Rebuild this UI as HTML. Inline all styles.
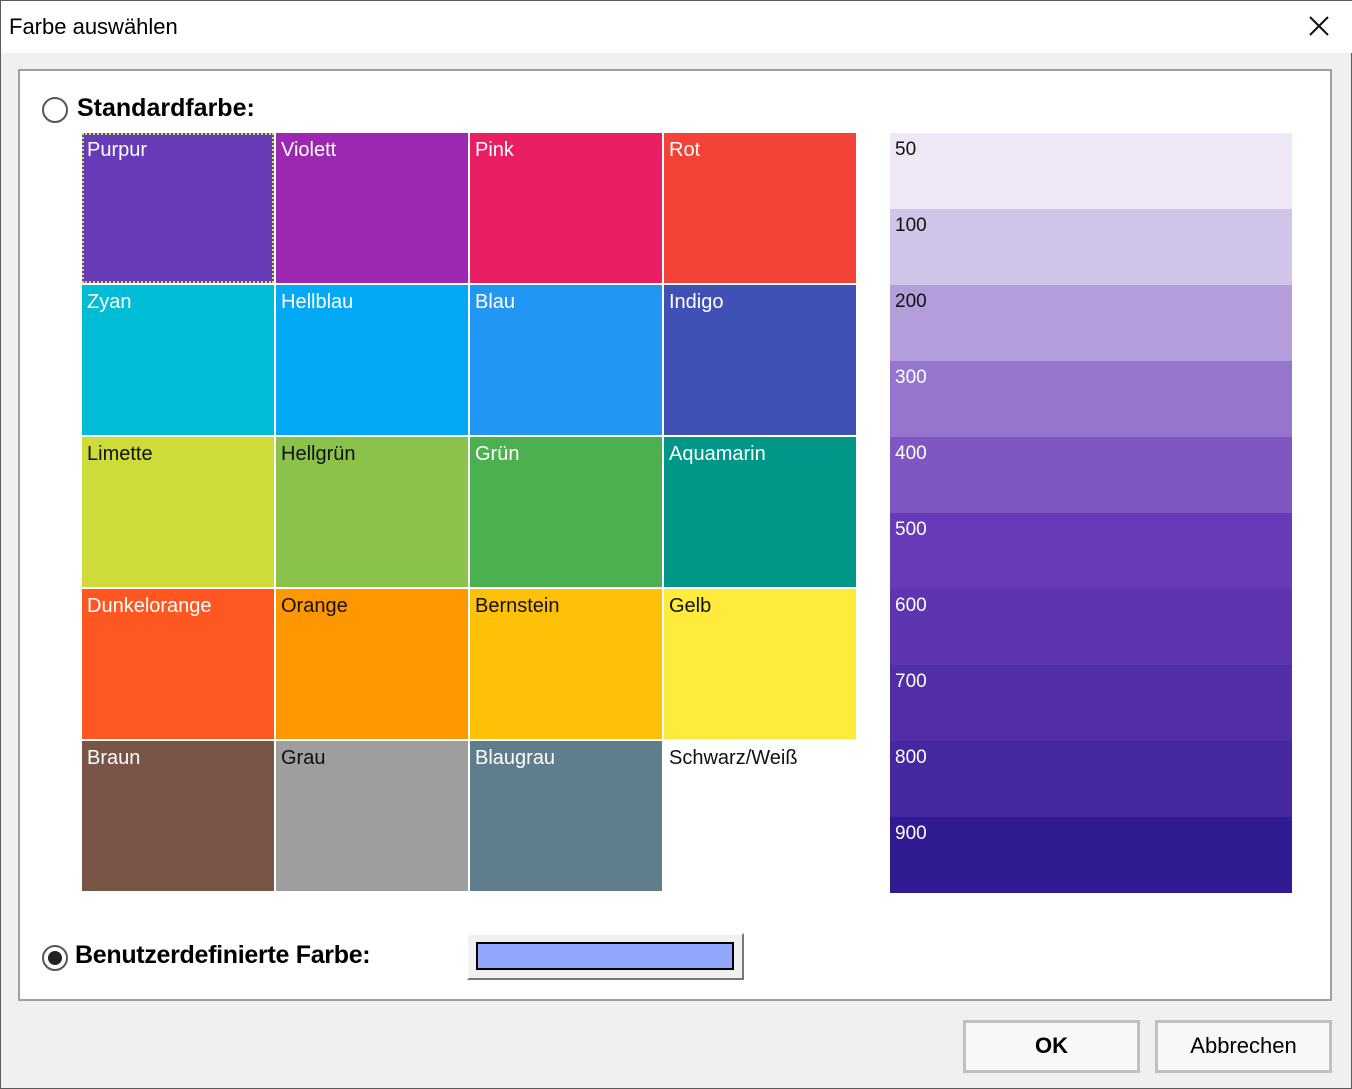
<!DOCTYPE html>
<html><head><meta charset="utf-8"><style>
*{margin:0;padding:0;box-sizing:border-box}
body{width:1352px;height:1089px;background:#f0f0f0;font-family:"Liberation Sans",sans-serif;position:relative;overflow:hidden;border:1px solid #5a5a5a}
.a{position:absolute}
.title{left:0;top:0;width:1352px;height:52px;background:#fff}
.c{position:absolute;width:192px;height:150px;font-size:20px;padding:6px 0 0 5px;color:#fff}
.s{position:absolute;left:889px;width:402px;height:76px;font-size:19px;padding:6px 0 0 5px;color:#fff}
.k{color:#111}
</style></head><body>
<div class="a title"></div>
<div class="a" style="left:8px;top:13px;font-size:22px;color:#000">Farbe auswählen</div>
<svg class="a" style="left:1307px;top:14px" width="22" height="22"><path d="M2 2L20 20M20 2L2 20" stroke="#111" stroke-width="2"/></svg>
<div class="a" style="left:17px;top:68px;width:1314px;height:932px;background:#fff;border:2px solid #a0a0a0"></div>
<div class="a" style="left:41px;top:96px;width:26px;height:26px;border:2px solid #555;border-radius:50%;background:#fff"></div>
<div class="a" style="left:76px;top:93px;font-size:25px;font-weight:bold">Standardfarbe:</div>

<div class="c" style="left:81px;top:132px;background:#673AB7;outline:2px dotted #cde04a;outline-offset:-2px">Purpur</div>
<div class="c" style="left:275px;top:132px;background:#9C27B0">Violett</div>
<div class="c" style="left:469px;top:132px;background:#E91E63">Pink</div>
<div class="c" style="left:663px;top:132px;background:#F44336">Rot</div>
<div class="c" style="left:81px;top:284px;background:#00BCD4">Zyan</div>
<div class="c" style="left:275px;top:284px;background:#03A9F4">Hellblau</div>
<div class="c" style="left:469px;top:284px;background:#2196F3">Blau</div>
<div class="c" style="left:663px;top:284px;background:#3F51B5">Indigo</div>
<div class="c k" style="left:81px;top:436px;background:#CDDC39">Limette</div>
<div class="c k" style="left:275px;top:436px;background:#8BC34A">Hellgrün</div>
<div class="c" style="left:469px;top:436px;background:#4CAF50">Grün</div>
<div class="c" style="left:663px;top:436px;background:#009688">Aquamarin</div>
<div class="c" style="left:81px;top:588px;background:#FF5722">Dunkelorange</div>
<div class="c k" style="left:275px;top:588px;background:#FF9800">Orange</div>
<div class="c k" style="left:469px;top:588px;background:#FFC107">Bernstein</div>
<div class="c k" style="left:663px;top:588px;background:#FFEB3B">Gelb</div>
<div class="c" style="left:81px;top:740px;background:#795548">Braun</div>
<div class="c k" style="left:275px;top:740px;background:#9E9E9E">Grau</div>
<div class="c" style="left:469px;top:740px;background:#607D8B">Blaugrau</div>
<div class="c k" style="left:663px;top:740px;background:#fff">Schwarz/Weiß</div>

<div class="s k" style="top:132px;background:#EDE7F6">50</div>
<div class="s k" style="top:208px;background:#D1C4E9">100</div>
<div class="s k" style="top:284px;background:#B39DDB">200</div>
<div class="s" style="top:360px;background:#9575CD">300</div>
<div class="s" style="top:436px;background:#7E57C2">400</div>
<div class="s" style="top:512px;background:#673AB7">500</div>
<div class="s" style="top:588px;background:#5E35B1">600</div>
<div class="s" style="top:664px;background:#512DA8">700</div>
<div class="s" style="top:740px;background:#4527A0">800</div>
<div class="s" style="top:816px;height:76px;background:#311B92">900</div>

<div class="a" style="left:41px;top:944px;width:26px;height:26px;border:2px solid #555;border-radius:50%;background:#fff"></div>
<div class="a" style="left:47px;top:950px;width:14px;height:14px;border-radius:50%;background:#222"></div>
<div class="a" style="left:74px;top:940px;font-size:25px;font-weight:bold;letter-spacing:-0.3px">Benutzerdefinierte Farbe:</div>
<div class="a" style="left:466px;top:932px;width:277px;height:47px;background:#f0f0f0;border:2px solid;border-color:#fafafa #777 #777 #fafafa"></div>
<div class="a" style="left:475px;top:941px;width:258px;height:28px;background:#93a6fd;border:2px solid #000"></div>

<div class="a" style="left:962px;top:1019px;width:177px;height:53px;background:#f8f8f8;border:3px solid #c0c0c0;font-size:22px;font-weight:bold;text-align:center;line-height:46px">OK</div>
<div class="a" style="left:1154px;top:1019px;width:177px;height:53px;background:#f8f8f8;border:3px solid #c0c0c0;font-size:22px;text-align:center;line-height:46px">Abbrechen</div>
</body></html>
